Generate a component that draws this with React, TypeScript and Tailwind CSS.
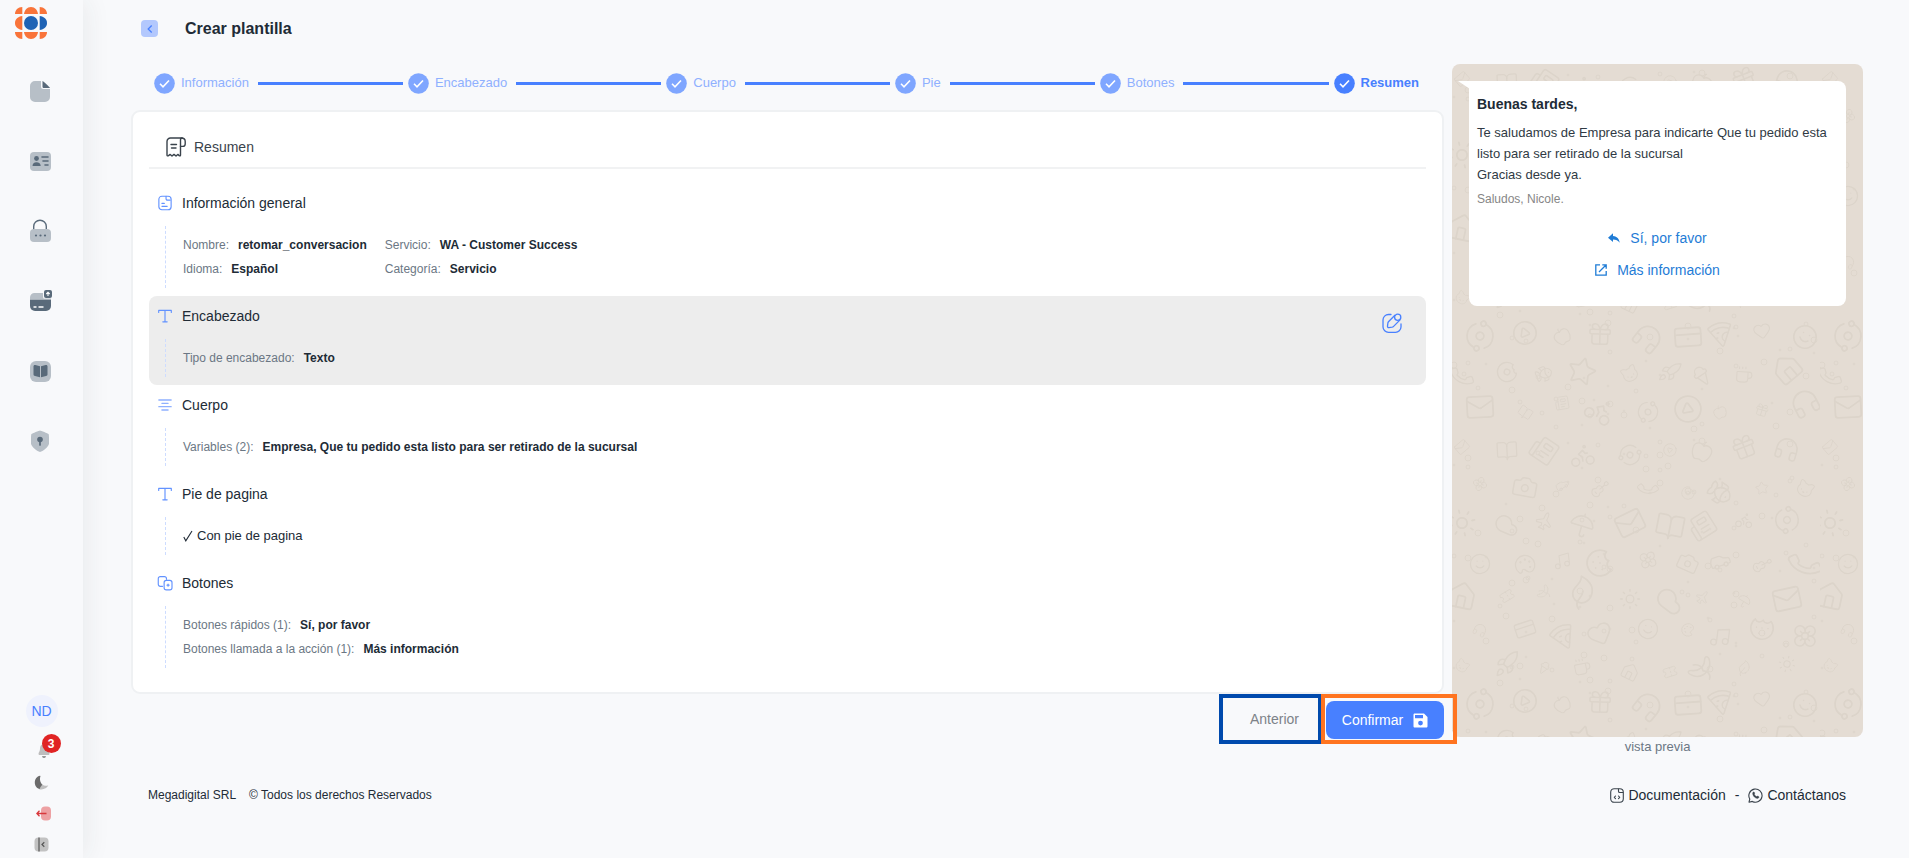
import React from "react";
import {
  Apple, Banana, Bike, Camera, Cat, Cloud, Coffee, Cookie, Donut, Fish, Flower, Gift, Guitar, Heart, House,
  IceCreamCone, Leaf, Mail, Music, Newspaper, Orbit, Palette, Phone, Pizza, Plane, Rocket, Smile, Star, Sun, Umbrella,
  BookOpen, CreditCard, Headphones, CirclePlay, Car, Ticket,
} from "lucide-react";

type Kids = { children: React.ReactNode };

/* ---------- Sidebar icons ---------- */

function Logo() {
  return (
    <svg viewBox="0 0 32 32" className="size-8">
      <g fill="#f9743a">
        <path d="M7.3 7H0C0 3 3 0 7.3 0z" />
        <path d="M9 7C9.6 3 12 0 16 0s6.400 3 7 7z" />
        <path d="M24.700 7H32c0-4-3-7-7.300-7z" />
        <path d="M7.300 9C3 9.500 0 12 0 16s3 6.500 7.300 7z" />
        <path d="M7.300 25H0c0 4 3 7 7.300 7z" />
        <path d="M9 25c.6 4 3 7 7 7s6.400-3 7-7z" />
        <path d="M24.700 25H32c0 4-3 7-7.300 7z" />
      </g>
      <circle cx="16" cy="16" r="7" fill="#1f63b5" />
      <path d="M24.700 9c4.300.5 7.300 3 7.300 7s-3 6.500-7.300 7z" fill="#1f63b5" />
    </svg>
  );
}

function NavSvg({ children }: Kids) {
  return (
    <svg viewBox="0 0 22 22" className="size-[22px] overflow-visible">
      {children}
    </svg>
  );
}

const LIGHT = "#b7bfc7";
const DARK = "#596a7a";

const navItems = [
  {
    label: "Documentos",
    icon: (
      <NavSvg>
        <path d="M6 1h6v5.500A2.500 2.500 0 0 0 14.500 9H21v8a5 5 0 0 1-5 5H6a5 5 0 0 1-5-5V6a5 5 0 0 1 5-5z" fill={LIGHT} />
        <path d="M13.500 1c.6 0 7.500 6.500 7.500 7h-6c-1 0-1.500-.5-1.500-1.500z" fill={DARK} />
      </NavSvg>
    ),
  },
  {
    label: "Contactos",
    icon: (
      <NavSvg>
        <rect x="1" y="2" width="21" height="19" rx="4" fill={LIGHT} />
        <circle cx="7.500" cy="8.500" r="2.400" fill={DARK} />
        <path d="M3.500 16c0-2.500 1.500-3.800 4-3.800s4.200 1.300 4.200 3.800z" fill={DARK} />
        <path d="M13 7h6M14 11h5M16 15h3" stroke={DARK} strokeWidth="1.600" strokeLinecap="round" />
      </NavSvg>
    ),
  },
  {
    label: "Seguridad",
    icon: (
      <NavSvg>
        <path d="M4.700 10V6.500a6.300 6.300 0 0 1 12.600 0V10" fill="none" stroke={DARK} strokeWidth="1.400" />
        <rect x="1" y="9" width="21" height="13" rx="4" fill={LIGHT} />
        <g fill={DARK}>
          <circle cx="7" cy="15.500" r="1.100" />
          <circle cx="11.500" cy="15.500" r="1.100" />
          <circle cx="16" cy="15.500" r="1.100" />
        </g>
      </NavSvg>
    ),
  },
  {
    label: "Pagos",
    icon: (
      <NavSvg>
        <path d="M1 9V7.500A4.500 4.500 0 0 1 5.500 3H14v3.500A2.500 2.500 0 0 0 16.500 9z" fill={LIGHT} />
        <path d="M16.500 9H22V8.500h-7z" fill={LIGHT} />
        <path d="M1 9.500h21V16a5 5 0 0 1-5 5H6a5 5 0 0 1-5-5z" fill={DARK} />
        <rect x="15" y="0" width="8" height="8" rx="2" fill={DARK} />
        <path d="M19 6V2.500M17.300 4 19 2.200 20.700 4" stroke="#fff" strokeWidth="1.100" fill="none" />
        <path d="M4.500 17h3M9.500 17h5" stroke="#fff" strokeWidth="1.500" />
      </NavSvg>
    ),
  },
  {
    label: "Biblioteca",
    icon: (
      <NavSvg>
        <rect x="1" y="1" width="21" height="21" rx="6" fill={LIGHT} />
        <path d="M4.500 6.500c0-1.200.8-1.700 1.800-1.500L11 6.300v11L6 16c-1-.2-1.500-.7-1.500-1.700z" fill={DARK} />
        <path d="M18.500 6.500c0-1.200-.8-1.700-1.800-1.500L12 6.300v11l5-1.300c1-.2 1.500-.7 1.500-1.700z" fill={DARK} />
      </NavSvg>
    ),
  },
  {
    label: "Privacidad",
    icon: (
      <NavSvg>
        <path d="M11 .5c.7 0 8 3 8.500 3.500.5.600.5 2 .5 9.500 0 3-6.500 8-9 8.500-2.500-.5-9-5.500-9-8.500C2 6 2 4.600 2.500 4 3 3.500 10.300.5 11 .5z" fill={LIGHT} />
        <circle cx="11" cy="9.500" r="2.800" fill={DARK} />
        <path d="M11 10v5" stroke={DARK} strokeWidth="1.700" strokeLinecap="round" />
      </NavSvg>
    ),
  },
];

function Sidebar() {
  return (
    <aside className="z-10 flex w-[83px] shrink-0 flex-col justify-between bg-[#f8f9fb] shadow-[4px_0_24px_rgba(40,50,60,0.07)]">
      <div>
        <a href="#inicio" aria-label="Inicio" className="ml-[15px] mt-[7px] block w-8">
          <Logo />
        </a>
        <nav className="mt-[41px] flex flex-col items-center gap-12 pr-1">
          {navItems.map((n) => (
            <a key={n.label} href="#" aria-label={n.label}>
              {n.icon}
            </a>
          ))}
        </nav>
      </div>
      <div className="flex flex-col items-center gap-4 pb-1.5">
        <div className="flex size-8 items-center justify-center rounded-full bg-[#eff2fd] text-sm text-[#4880ff]">ND</div>
        <button type="button" aria-label="Notificaciones" className="relative ml-1 size-4">
          <svg viewBox="0 0 16 16" className="size-4">
            <path d="M8 1c3 0 4 2.500 4 5 0 2 1.500 3.500 1.500 4.700 0 .8-.5 1.300-1.300 1.300H3.800c-.8 0-1.300-.5-1.300-1.300C2.500 9.500 4 8 4 6c0-2.500 1-5 4-5z" fill="#bdbdbd" />
            <path d="M6 13.200h4c-.3 1.200-1 1.600-2 1.600s-1.700-.4-2-1.600z" fill="#777" />
          </svg>
          <span className="absolute -top-[9px] left-1.5 flex size-[19px] items-center justify-center rounded-full bg-[#e02424] text-xs font-bold text-white">
            3
          </span>
        </button>
        <button type="button" aria-label="Modo oscuro" className="size-[15px]">
          <svg viewBox="0 0 15 15" className="size-[15px]">
            <path d="M6 .7C3 1.300.8 4 .8 7.500c0 3.300 2 6 5.200 6.700C7 13 9 11 8.600 10 7 8.500 5 5 6.500 1z" fill="#6b6b6b" />
            <path d="M5.500 14.200c4 .8 7.500-1.200 8.800-4-2 .9-4.300.7-6-.7-1 1.500-2.300 3-2.800 4.700z" fill="#c0c0c0" />
          </svg>
        </button>
        <button type="button" aria-label="Cerrar sesión" className="ml-1 size-[15px]">
          <svg viewBox="0 0 15 15" className="size-[15px]">
            <path d="M5 4.500C5 2 6.500.5 9 .5h2c2.500 0 4 1.500 4 4v6c0 2.500-1.500 4-4 4H9c-2.500 0-4-1.500-4-4z" fill="#eda1a3" />
            <path d="M10.500 7.500H1M3.500 4.800.9 7.500l2.600 2.700" fill="none" stroke="#d8383c" strokeWidth="1.300" />
          </svg>
        </button>
        <button type="button" aria-label="Contraer menú" className="size-[15px]">
          <svg viewBox="0 0 15 15" className="size-[15px]">
            <rect x=".5" y=".5" width="14" height="14" rx="4" fill="#c2c2c2" />
            <path d="M5 .5v14" stroke="#555" strokeWidth="1.200" />
            <path d="M10.300 5.300 8 7.500l2.300 2.200" fill="none" stroke="#555" strokeWidth="1.200" />
          </svg>
        </button>
      </div>
    </aside>
  );
}

/* ---------- Stepper ---------- */

const steps = ["Información", "Encabezado", "Cuerpo", "Pie", "Botones", "Resumen"];

function Stepper() {
  return (
    <ol className="flex items-center pl-[23px] pr-[25px] pt-2 text-[13px] leading-[22px]">
      {steps.map((s, i) => {
        const last = i === steps.length - 1;
        return (
          <li key={s} className={last ? "flex items-center" : "flex grow items-center"}>
            <svg viewBox="0 0 21 21" className={last ? "size-[21px] text-[#4880ff]" : "size-[21px] text-[#7fa6ff]"}>
              <circle cx="10.500" cy="10.500" r="10.300" fill="currentColor" />
              <path d="m6 10.800 3 3 6-6.300" fill="none" stroke="#fff" strokeWidth="1.600" />
            </svg>
            <span className={last ? "ml-1.5 font-bold text-[#4880ff]" : "ml-1.5 text-[#8fb0ff]"}>{s}</span>
            {!last && <span className="ml-[9px] mr-[5px] h-[3px] grow bg-[#4880ff]" />}
          </li>
        );
      })}
    </ol>
  );
}

/* ---------- Summary sections ---------- */

function SmallIcon({ children }: Kids) {
  return (
    <svg viewBox="0 0 16 16" className="h-4 w-[14px] shrink-0 overflow-visible" fill="none" stroke="#6292ff" strokeWidth="1.300" strokeLinecap="round" strokeLinejoin="round">
      {children}
    </svg>
  );
}

const docIcon = (
  <SmallIcon>
    <rect x="1" y=".3" width="14" height="15.400" rx="3.500" />
    <path d="M9.200.5v2.600c0 1 .6 1.600 1.600 1.600H14M4.500 8.500h2.700M4.500 11.800h6" />
  </SmallIcon>
);
const textIcon = (
  <SmallIcon>
    <path d="M.8 4V1.500h14.400V4M8 1.500v13.200M5.500 14.700h5" />
  </SmallIcon>
);
const linesIcon = (
  <SmallIcon>
    <path d="M1 2.300h14M4.500 6.100h7M1 9.900h14M4.500 13.700h7" strokeWidth="1.600" stroke="#8fb0ff" />
  </SmallIcon>
);
const copyIcon = (
  <SmallIcon>
    <path d="M9.700 3.800V3A2.300 2.300 0 0 0 7.400.7H2.600A2.300 2.300 0 0 0 .3 3v6.500a2.300 2.300 0 0 0 2.300 2.300h2.600" />
    <rect x="7" y="5" width="9" height="10.800" rx="2.500" />
    <path d="M11.500 9.300v2.400M10.300 10.500h2.400" />
  </SmallIcon>
);

function Field({ label, value }: { label: string; value: string }) {
  return (
    <div className="flex gap-[9px]">
      <dt className="text-[#6b7784]">{label}</dt>
      <dd className="font-bold text-[#212b36]">{value}</dd>
    </div>
  );
}

function Section({ icon, title, active, children }: Kids & { icon: React.ReactNode; title: string; active?: boolean }) {
  return (
    <section className={active ? "flex justify-between rounded-lg bg-[#ededed] py-2 pl-[9px]" : "py-2 pl-[9px]"}>
      <div>
        <h3 className="flex items-center gap-[10px] text-sm leading-6 text-[#212b36]">
          {icon}
          {title}
        </h3>
        <div className="ml-[7px] mt-[11px] border-l border-dashed border-[#cddcff] py-[7px] pl-[17px] text-xs leading-6">
          {children}
        </div>
      </div>
      {active && (
        <button type="button" aria-label="Editar" className="mr-6 mt-[9px] size-5">
          <svg viewBox="0 0 20 20" className="size-5" fill="none" stroke="#4880ff" strokeWidth="1.300" strokeLinecap="round" strokeLinejoin="round">
            <path d="M9 1.500H6.500a5.500 5.500 0 0 0-5.500 5.500v7A5.500 5.500 0 0 0 6.500 19.300h7A5.500 5.500 0 0 0 19 14v-3" />
            <path d="M12.900 2.300 6.700 8.500c-.4.400-.7 1-.8 1.500l-.4 3.200c-.1.900.5 1.500 1.400 1.400l3.100-.4c.6-.1 1.200-.4 1.600-.8l6.200-6.300" />
            <circle cx="15.700" cy="4.300" r="3.100" />
          </svg>
        </button>
      )}
    </section>
  );
}

function SummaryCard() {
  return (
    <div className="mt-4 rounded-[9px] border-2 border-[#eff1f3] bg-white px-4 pb-4">
      <h2 className="mb-[14px] flex items-center gap-2 border-b-2 border-[#f1f2f3] pb-2 pl-[17px] pt-[23px] text-sm leading-6 text-[#3a434c]">
        <svg viewBox="0 0 20 20" className="size-5" fill="none" stroke="#3a434c" strokeWidth="1.400" strokeLinecap="round" strokeLinejoin="round">
          <path d="M15.300 1H4.500A3.500 3.500 0 0 0 1 4.500V18c0 .9.700 1.200 1.500.6l1.700-1.200L6 19l2-1.600L10 19l1.800-1.600 1.400 1.200c.8.600 1.300.3 1.300-.6V3c0-1.200.6-2 1.800-2" />
          <path d="M15.300 1c2.500 0 3.900 1.200 3.900 3.500V7c0 1.600-.8 2.400-2.300 2.400h-2.400" />
          <path d="M5 7.500h5.500M5.500 11h4.500" />
        </svg>
        Resumen
      </h2>
      <Section icon={docIcon} title="Información general">
        <dl className="grid grid-cols-[max-content_max-content] gap-x-[18px]">
          <Field label="Nombre:" value="retomar_conversacion" />
          <Field label="Servicio:" value="WA - Customer Success" />
          <Field label="Idioma:" value="Español" />
          <Field label="Categoría:" value="Servicio" />
        </dl>
      </Section>
      <Section icon={textIcon} title="Encabezado" active>
        <dl>
          <Field label="Tipo de encabezado:" value="Texto" />
        </dl>
      </Section>
      <Section icon={linesIcon} title="Cuerpo">
        <dl>
          <Field label="Variables (2):" value="Empresa, Que tu pedido esta listo para ser retirado de la sucursal" />
        </dl>
      </Section>
      <Section icon={textIcon} title="Pie de pagina">
        <p className="flex items-center gap-1 text-[13px] text-[#212b36]">
          <svg viewBox="0 0 10 12" className="h-3 w-[10px]" fill="none" stroke="#212b36" strokeWidth="1.100">
            <path d="m.8 7 2 3.800L9 1" />
          </svg>
          Con pie de pagina
        </p>
      </Section>
      <Section icon={copyIcon} title="Botones">
        <dl>
          <Field label="Botones rápidos (1):" value="Sí, por favor" />
          <Field label="Botones llamada a la acción (1):" value="Más información" />
        </dl>
      </Section>
    </div>
  );
}

/* ---------- Chat preview ---------- */

const doodles = [
  Mail, Star, Pizza, Cloud, Phone, Gift, Banana, Camera, Orbit, Coffee, Music, BookOpen, Cat, Heart, Plane, Donut,
  Headphones, Leaf, Car, CirclePlay, House, Cookie, Newspaper, Rocket, Smile, Umbrella, Fish, CreditCard, Sun, Guitar,
  Apple, Ticket, Flower, Bike, IceCreamCone, Palette,
];

function Wallpaper() {
  return (
    <svg aria-hidden="true" className="absolute inset-0 h-full w-full">
      <defs>
        <pattern id="doodles" width="368" height="368" patternUnits="userSpaceOnUse">
          <g color="#dcd4ca">
            {Array.from({ length: 90 }, (_, i) => {
              const col = i % 9;
              const row = Math.floor(i / 9);
              const Icon = doodles[(i * 11 + row * 5) % doodles.length];
              const size = 15 + ((i * i * 7 + row * 3) % 5) * 4;
              const x = col * 40 + 14 + (row % 2) * 18 + ((i * i * 5) % 9) - 4;
              const y = row * 36 + 20 + ((i * i * 3 + col) % 11) - 5;
              const turn = ((i * 37) % 80) - 40;
              return (
                <g key={i} transform={`translate(${x} ${y}) rotate(${turn})`}>
                  <Icon x={-size / 2} y={-size / 2} width={size} height={size} strokeWidth={1.4} />
                </g>
              );
            })}
          </g>
          <g fill="none" stroke="#ddd5cb">
            {Array.from({ length: 170 }, (_, i) => (
              <circle key={i} cx={((i * 71 + i * i * 3) % 364) + 2} cy={((i * 113 + 31) % 364) + 2} r={1 + (i % 3)} />
            ))}
          </g>
        </pattern>
      </defs>
      <rect width="100%" height="100%" fill="url(#doodles)" />
    </svg>
  );
}

function Preview() {
  return (
    <aside className="flex flex-col">
      <div className="relative grow overflow-hidden rounded-lg bg-[#e4dcd3] p-[17px]">
        <Wallpaper />
        <div className="relative rounded-lg rounded-tl-none bg-white px-2 pb-5 pt-3 text-[13px] leading-[21px] text-[#303a44]">
          <svg viewBox="0 0 12 8" className="absolute -left-[11px] top-0 h-2 w-3">
            <path d="M0 0h12v8z" fill="#fff" />
          </svg>
          <p className="text-sm leading-[22px] font-bold text-[#212b36]">Buenas tardes,</p>
          <p className="mt-[7px]">Te saludamos de Empresa para indicarte Que tu pedido esta listo para ser retirado de la sucursal</p>
          <p>Gracias desde ya.</p>
          <p className="mt-1 text-xs leading-5 text-[#868686]">Saludos, Nicole.</p>
          <div className="mt-[13px] flex flex-col items-center text-sm leading-8 text-[#1f7cd6]">
            <button type="button" className="flex items-center gap-[10px]">
              <svg viewBox="0 0 12 12" className="size-3" fill="#1f7cd6">
                <path d="M5 1.300 0 5.700l5 4.400V7.500c3 0 5 .8 6.700 3.300C11.300 7.300 9.500 4.400 5 3.900z" />
              </svg>
              Sí, por favor
            </button>
            <button type="button" className="flex items-center gap-[10px]">
              <svg viewBox="0 0 12 12" className="size-3" fill="none" stroke="#1f7cd6" strokeWidth="1.300">
                <path d="M5 .8H.8v10.400h10.400V7M7.300.8h3.900v3.900M11 1 4 8" />
              </svg>
              Más información
            </button>
          </div>
        </div>
      </div>
      <p className="text-center text-[13px] leading-5 text-[#6b7784]">vista previa</p>
    </aside>
  );
}

function Actions() {
  return (
    <div className="relative z-10 -mr-[13px] flex justify-end">
      <div className="border-4 border-[#004aad]">
        <button type="button" className="h-[42px] pl-[27px] pr-[19px] text-sm text-[#7d8288]">
          Anterior
        </button>
      </div>
      <div className="-ml-px border-4 border-[#ff7420] pr-[9px] pl-px pt-[3px]">
        <button type="button" className="flex h-[38px] w-[118px] items-center justify-center gap-[10px] rounded-lg bg-[#4880ff] text-sm text-white">
          Confirmar
          <svg viewBox="0 0 15 15" className="size-[15px]">
            <path fillRule="evenodd" d="M1.800.5H11L14.500 4v9.200c0 .8-.5 1.300-1.300 1.300H1.800c-.8 0-1.300-.5-1.300-1.300V1.800C.5 1 1 .5 1.800.5zM2 2v3.200h8V2zm5.500 5.700a2.400 2.400 0 1 0 0 4.800 2.400 2.400 0 0 0 0-4.800z" fill="#fff" />
          </svg>
        </button>
      </div>
    </div>
  );
}

export default function App() {
  return (
    <div className="mr-[11px] flex min-h-screen bg-[#f8f9fb] font-['Liberation_Sans',Arial,sans-serif]">
      <Sidebar />
      <main className="flex min-w-0 grow flex-col pl-12 pr-[46px]">
        <header className="flex h-[57px] items-center gap-[27px] pl-[10px]">
          <button type="button" aria-label="Volver" className="flex size-[17px] items-center justify-center rounded bg-[#b3c8fd]">
            <svg viewBox="0 0 10 10" className="size-[10px]" fill="none" stroke="#4880ff" strokeWidth="1.300">
              <path d="M6.700 1.500 3.200 5l3.500 3.500" />
            </svg>
          </button>
          <h1 className="text-base leading-6 font-bold text-[#212b36]">Crear plantilla</h1>
        </header>
        <div className="mt-[7px] grid grid-cols-[minmax(0,1fr)_411px] gap-x-2">
          <div className="pb-[13px]">
            <Stepper />
            <SummaryCard />
            <Actions />
          </div>
          <Preview />
        </div>
        <footer className="mt-[26px] flex items-center justify-between pl-[17px] pr-[17px] text-[#212b36]">
          <p className="flex gap-[13px] text-xs leading-6">
            <span>Megadigital SRL</span>
            <span>© Todos los derechos Reservados</span>
          </p>
          <p className="flex items-center gap-[9px] text-sm leading-6">
            <a href="#documentacion" className="flex items-center gap-1">
              <svg viewBox="0 0 14 15" className="h-[15px] w-[14px]" fill="none" stroke="#3a434c" strokeWidth="1.100" strokeLinecap="round" strokeLinejoin="round">
                <rect x=".7" y=".7" width="12.600" height="13.600" rx="3.500" />
                <path d="M8.500 1v2.200c0 .8.500 1.300 1.300 1.300h3M5.500 8 4.300 9.300l1.200 1.300M8.500 8l1.200 1.300-1.200 1.300" />
              </svg>
              Documentación
            </a>
            <span>-</span>
            <a href="#contacto" className="flex items-center gap-1">
              <svg viewBox="0 0 15 15" className="size-[15px]" fill="none" stroke="#3a434c" strokeWidth="1.100" strokeLinejoin="round">
                <path d="M1 14.200 1.800 11a6.600 6.600 0 1 1 2.500 2.400z" />
                <path d="M5 4.200c.8-.6 1.300-.2 1.700.7.300.7-.5 1-.3 1.500.4 1 1.200 1.700 2.100 2.100.6.200.9-.7 1.600-.3.900.4 1.200.9.600 1.600-1 1.100-2.500.7-4-.5S4 5.200 5 4.200z" fill="#3a434c" strokeWidth=".4" />
              </svg>
              Contáctanos
            </a>
          </p>
        </footer>
      </main>
    </div>
  );
}
